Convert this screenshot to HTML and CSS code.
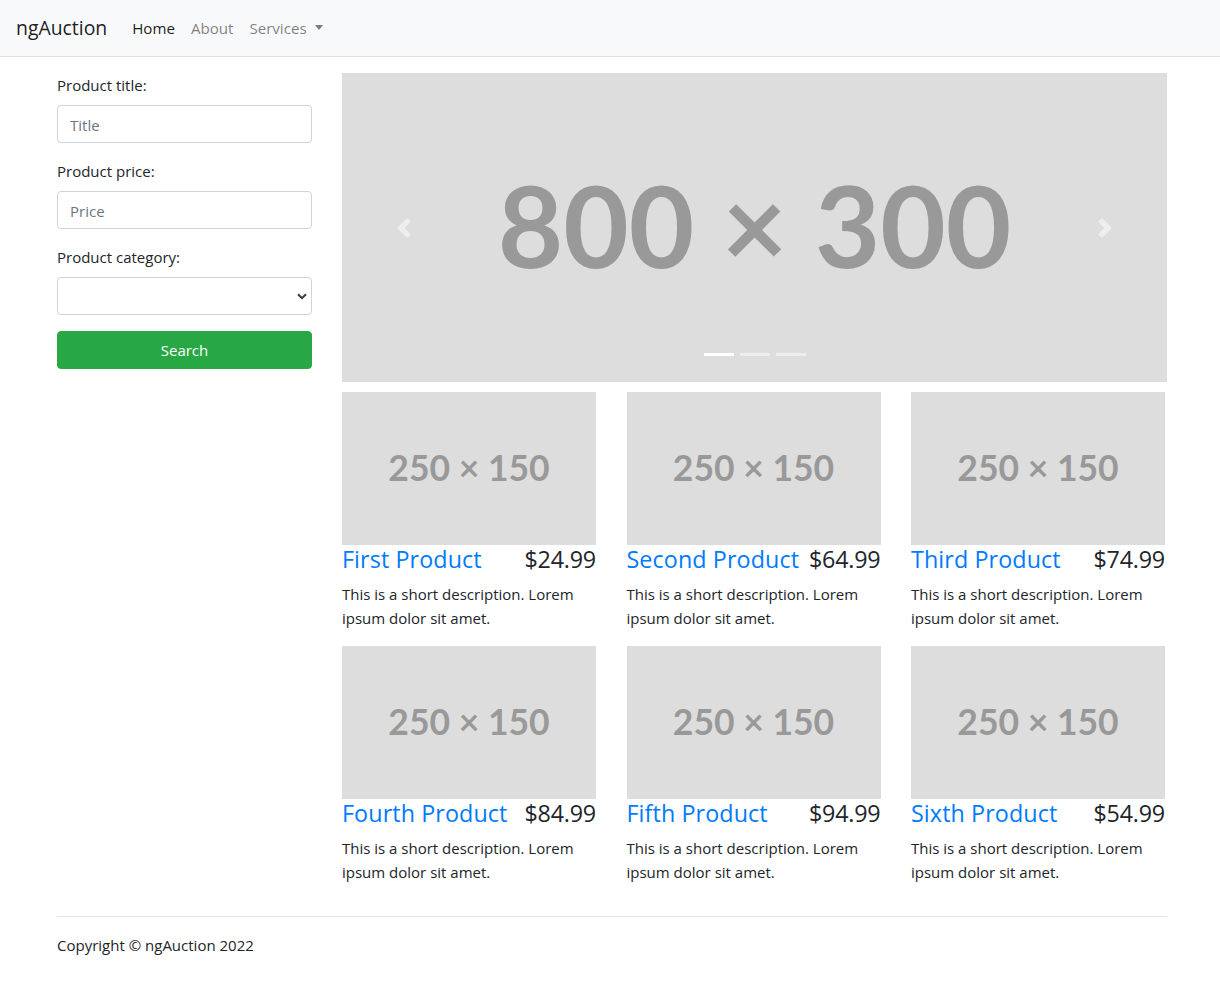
FILE: index.html
```html
<!DOCTYPE html>
<html lang="en">
<head>
<meta charset="utf-8">
<title>ngAuction</title>
<link rel="stylesheet" href="styles.css">
</head>
<body>
<nav class="navbar">
  <a class="brand" href="#">ngAuction</a>
  <ul class="nav">
    <li><a class="nav-link active" href="#">Home</a></li>
    <li><a class="nav-link" href="#">About</a></li>
    <li><a class="nav-link dropdown-toggle" href="#">Services</a></li>
  </ul>
</nav>

<div class="container">
  <div class="layout">
    <aside class="sidebar">
      <form class="search-form">
        <div class="form-group">
          <label for="title">Product title:</label>
          <input id="title" class="form-control" type="text" placeholder="Title">
        </div>
        <div class="form-group">
          <label for="price">Product price:</label>
          <input id="price" class="form-control" type="text" placeholder="Price">
        </div>
        <div class="form-group">
          <label for="category">Product category:</label>
          <div class="select-wrap">
            <select id="category" class="form-control select"><option></option></select>
            <svg class="select-arrow" width="10" height="7" viewBox="0 0 10 7"><path d="M1 1.2l4 4 4-4" fill="none" stroke="#3a3a3a" stroke-width="2"/></svg>
          </div>
        </div>
        <button type="button" class="btn-search">Search</button>
      </form>
    </aside>

    <main class="content">
      <div class="carousel">
        <div class="placeholder big">800 × 300</div>
        <span class="control prev"><svg width="20" height="20" viewBox="0 0 8 8"><path fill="#fff" d="M5.25 0l-4 4 4 4 1.5-1.5L4.25 4l2.5-2.5L5.25 0z"/></svg></span>
        <span class="control next"><svg width="20" height="20" viewBox="0 0 8 8"><path fill="#fff" d="M2.75 0l-1.5 1.5L3.75 4l-2.5 2.5L2.75 8l4-4-4-4z"/></svg></span>
        <ol class="indicators">
          <li class="on"></li><li></li><li></li>
        </ol>
      </div>

      <div class="products">
        <div class="card">
          <div class="placeholder small">250 × 150</div>
          <div class="card-head"><h4><a href="#">First Product</a></h4><h4 class="price">$24.99</h4></div>
          <p>This is a short description. Lorem ipsum dolor sit amet.</p>
        </div>
        <div class="card">
          <div class="placeholder small">250 × 150</div>
          <div class="card-head"><h4><a href="#">Second Product</a></h4><h4 class="price">$64.99</h4></div>
          <p>This is a short description. Lorem ipsum dolor sit amet.</p>
        </div>
        <div class="card">
          <div class="placeholder small">250 × 150</div>
          <div class="card-head"><h4><a href="#">Third Product</a></h4><h4 class="price">$74.99</h4></div>
          <p>This is a short description. Lorem ipsum dolor sit amet.</p>
        </div>
        <div class="card">
          <div class="placeholder small">250 × 150</div>
          <div class="card-head"><h4><a href="#">Fourth Product</a></h4><h4 class="price">$84.99</h4></div>
          <p>This is a short description. Lorem ipsum dolor sit amet.</p>
        </div>
        <div class="card">
          <div class="placeholder small">250 × 150</div>
          <div class="card-head"><h4><a href="#">Fifth Product</a></h4><h4 class="price">$94.99</h4></div>
          <p>This is a short description. Lorem ipsum dolor sit amet.</p>
        </div>
        <div class="card">
          <div class="placeholder small">250 × 150</div>
          <div class="card-head"><h4><a href="#">Sixth Product</a></h4><h4 class="price">$54.99</h4></div>
          <p>This is a short description. Lorem ipsum dolor sit amet.</p>
        </div>
      </div>
    </main>
  </div>

  <footer class="footer">
    <hr>
    <p>Copyright © ngAuction 2022</p>
  </footer>
</div>
</body>
</html>
```

FILE: styles.css
```css
* { box-sizing: border-box; }

html, body {
  margin: 0;
  padding: 0;
}

body {
  font-family: "Open Sans", "Noto Sans", "Liberation Sans", sans-serif;
  font-size: 15px;
  line-height: 24px;
  color: #212529;
  background: #fff;
}

a { text-decoration: none; }

/* Navbar */
.navbar {
  display: flex;
  align-items: center;
  height: 57px;
  padding: 8px 16px;
  background: #f8f9fa;
  border-bottom: 1px solid #dfe1e4;
}

.brand {
  font-size: 19.4px;
  line-height: 30px;
  padding: 5px 0;
  margin-right: 17px;
  color: rgba(0, 0, 0, 0.9);
}

.nav {
  display: flex;
  list-style: none;
  margin: 0;
  padding: 0;
}

.nav-link {
  display: block;
  padding: 8px;
  font-size: 15.1px;
  color: rgba(0, 0, 0, 0.5);
}

.nav-link.active { color: rgba(0, 0, 0, 0.9); }

.dropdown-toggle::after {
  content: "";
  display: inline-block;
  margin-left: 8px;
  vertical-align: 4px;
  border-top: 5px solid;
  border-left: 4.5px solid transparent;
  border-right: 4.5px solid transparent;
}

/* Container */
.container {
  max-width: 1140px;
  margin: 0 auto;
  padding: 16px 13px 0 17px;
}

.layout {
  display: grid;
  grid-template-columns: 255px 825px;
  column-gap: 30px;
  align-items: start;
}

/* Sidebar form */
.form-group { margin-bottom: 16px; }

.form-group label {
  display: inline-block;
  margin-bottom: 8px;
}

.form-control {
  display: block;
  width: 100%;
  height: 38px;
  padding: 7px 12px 5px;
  font-family: inherit;
  font-size: 15px;
  line-height: 24px;
  color: #495057;
  background: #fff;
  border: 1px solid #ced4da;
  border-radius: 4px;
  outline: none;
}

.form-control::placeholder { color: #6c757d; }

.select-wrap { position: relative; }

.select {
  appearance: none;
  -webkit-appearance: none;
}

.select-arrow {
  position: absolute;
  right: 5px;
  top: 16px;
  pointer-events: none;
}

.btn-search {
  display: block;
  width: 100%;
  height: 38px;
  padding: 6px 12px;
  font-family: inherit;
  font-size: 15px;
  line-height: 24px;
  color: #fff;
  background: #28a745;
  border: 1px solid #28a745;
  border-radius: 4px;
}

/* Placeholders */
.placeholder {
  display: flex;
  align-items: center;
  justify-content: center;
  background: #dddddd;
  color: #999999;
  font-family: Lato, "Liberation Sans", sans-serif;
  font-weight: 700;
  white-space: nowrap;
}

.placeholder.big {
  height: 309px;
  font-size: 113px;
  line-height: 1;
  padding-bottom: 6px;
}

.placeholder.small {
  height: 153px;
  font-size: 35.5px;
  line-height: 1;
  padding-bottom: 2px;
}

/* Carousel */
.carousel {
  position: relative;
  margin-bottom: 10px;
}

.control {
  position: absolute;
  top: 0;
  bottom: 0;
  width: 15%;
  display: flex;
  align-items: center;
  justify-content: center;
  opacity: 0.5;
}

.control.prev { left: 0; }
.control.next { right: 0; }
.control svg { display: block; }

.indicators {
  position: absolute;
  left: 0;
  right: 0;
  bottom: 0;
  margin: 0 0 16px;
  padding: 0;
  list-style: none;
  display: flex;
  justify-content: center;
}

.indicators li {
  width: 30px;
  height: 3px;
  margin: 10px 3px;
  background: #fff;
  opacity: 0.5;
}

.indicators li.on { opacity: 1; }

/* Products */
.products {
  display: grid;
  grid-template-columns: repeat(3, 254px);
  column-gap: 30.5px;
}

.card-head {
  display: flex;
  justify-content: space-between;
  align-items: baseline;
  margin-bottom: 8px;
}

.card-head h4 {
  margin: 0;
  font-size: 23.3px;
  line-height: 28.8px;
  font-weight: 400;
  white-space: nowrap;
}

.card-head h4 a {
  color: #007bff;
  letter-spacing: 0.1px;
}

.card-head .price { color: #212529; letter-spacing: -0.2px; }

.card p {
  margin: 0 0 16px;
}

/* Footer */
.footer hr {
  margin: 16px 0;
  border: 0;
  border-top: 1px solid rgba(0, 0, 0, 0.1);
}

.footer p {
  margin: 0 0 16px;
}
```
